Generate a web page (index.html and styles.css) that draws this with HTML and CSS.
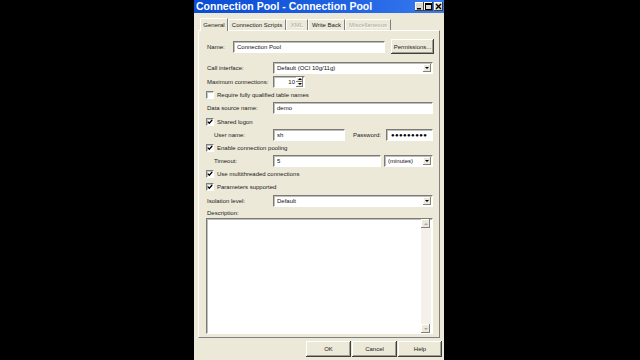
FILE: index.html
```html
<!DOCTYPE html>
<html lang="en">
<head>
  <meta charset="UTF-8" />
  <title>Connection Pool</title>
  <link rel="stylesheet" href="styles.css">
</head>
<body>

<div class="window">
  <div class="titlebar">
    <span class="title">Connection Pool - Connection Pool</span>
    <div class="caption">
      <span class="cap-btn"><svg width="7" height="7" viewBox="0 0 7 7"><rect x="1" y="5" width="4" height="1.5" fill="#000"/></svg></span>
      <span class="cap-btn"><svg width="7" height="7" viewBox="0 0 7 7"><rect x="0.5" y="0.5" width="6" height="6" fill="none" stroke="#000"/><rect x="0.5" y="0.5" width="6" height="1.5" fill="#000"/></svg></span>
      <span class="cap-btn close"><svg width="7" height="7" viewBox="0 0 7 7"><path d="M1 1 L6 6 M6 1 L1 6" stroke="#000" stroke-width="1.4"/></svg></span>
    </div>
  </div>

  <div class="tabs">
    <span class="tab active w-general">General</span>
    <span class="tab w-scripts">Connection Scripts</span>
    <span class="tab disabled w-xml">XML</span>
    <span class="tab w-write">Write Back</span>
    <span class="tab disabled w-misc">Miscellaneous</span>
  </div>

  <div class="panel">
    <div class="row row-name">
      <span class="label label-name">Name:</span>
      <div class="field name-field">Connection Pool</div>
      <span class="button perm">Permissions...</span>
    </div>

    <div class="row gap7">
      <span class="label">Call interface:</span>
      <div class="field select wide">Default (OCI 10g/11g)<span class="drop"><i class="arrow"></i></span></div>
    </div>

    <div class="row gap1">
      <span class="label">Maximum connections:</span>
      <div class="field spin">10<span class="spin-btns"><span class="spin-up"><i class="arrow up"></i></span><span class="spin-down"><i class="arrow"></i></span></span></div>
    </div>

    <div class="row">
      <span class="check"></span>
      <span>Require fully qualified table names</span>
    </div>

    <div class="row">
      <span class="label">Data source name:</span>
      <div class="field wide">demo</div>
    </div>

    <div class="row gap1">
      <span class="check on"><svg width="6" height="6" viewBox="0 0 6 6"><path d="M0.8 2.6 L2.3 4.2 L5.2 1" fill="none" stroke="#000" stroke-width="1.3"/></svg></span>
      <span>Shared logon</span>
    </div>

    <div class="row">
      <span class="label indent">User name:</span>
      <div class="field user">sh</div>
      <span class="label pass-label">Password:</span>
      <div class="field pass">●●●●●●●●●</div>
    </div>

    <div class="row">
      <span class="check on"><svg width="6" height="6" viewBox="0 0 6 6"><path d="M0.8 2.6 L2.3 4.2 L5.2 1" fill="none" stroke="#000" stroke-width="1.3"/></svg></span>
      <span>Enable connection pooling</span>
    </div>

    <div class="row">
      <span class="label indent">Timeout:</span>
      <div class="field timeout">5</div>
      <div class="field select minutes">(minutes)<span class="drop"><i class="arrow"></i></span></div>
    </div>

    <div class="row">
      <span class="check on"><svg width="6" height="6" viewBox="0 0 6 6"><path d="M0.8 2.6 L2.3 4.2 L5.2 1" fill="none" stroke="#000" stroke-width="1.3"/></svg></span>
      <span>Use multithreaded connections</span>
    </div>

    <div class="row">
      <span class="check on"><svg width="6" height="6" viewBox="0 0 6 6"><path d="M0.8 2.6 L2.3 4.2 L5.2 1" fill="none" stroke="#000" stroke-width="1.3"/></svg></span>
      <span>Parameters supported</span>
    </div>

    <div class="row gap1">
      <span class="label">Isolation level:</span>
      <div class="field select wide">Default<span class="drop"><i class="arrow"></i></span></div>
    </div>

    <div class="row desc-label">Description:</div>

    <div class="field textarea">
      <div class="scrollbar">
        <span class="sb-btn"><i class="arrow up dim"></i></span>
        <span class="sb-track"></span>
        <span class="sb-btn"><i class="arrow dim"></i></span>
      </div>
    </div>
  </div>

  <div class="footer">
    <span class="button foot">OK</span>
    <span class="button foot">Cancel</span>
    <span class="button foot help">Help</span>
  </div>
</div>

</body>
</html>
```

FILE: styles.css
```css
* { box-sizing: border-box; }
body { margin: 0; background: #000; font-family: "Liberation Sans", Arial, sans-serif; font-size: 6px; color: #1a1a1a; overflow: hidden; }

.window { width: 250px; height: 360px; margin-left: 194px; background: #ece9d8; display: flex; flex-direction: column; }

.titlebar { height: 13px; display: flex; align-items: center; justify-content: space-between; padding: 0 1px 0 2px; background: linear-gradient(to right, #0a4cd4, #1f62e2 60%, #3a7bef); }
.title { color: #fff; font-weight: bold; font-size: 10.5px; line-height: 13px; }
.caption { display: flex; }
.cap-btn { width: 9px; height: 9px; display: flex; align-items: center; justify-content: center; background: #dcd8ce; box-shadow: inset -1px -1px #404040, inset 1px 1px #fff; }
.cap-btn.close { margin-left: 1px; }

.tabs { display: flex; align-items: flex-end; height: 13px; margin: 4px 0 0 6px; }
.tab { height: 11px; display: flex; align-items: center; justify-content: center; border-top: 1px solid #fff; border-left: 1px solid #fff; border-right: 1px solid #808080; }
.tab.active { height: 13px; background: #ece9d8; margin-bottom: -1px; position: relative; }
.tab.disabled { color: #aca899; text-shadow: 1px 1px 0 #fff; }
.w-general { width: 28px; }
.w-scripts { width: 58px; }
.w-xml { width: 22px; }
.w-write { width: 37px; }
.w-misc { width: 46px; }

.panel { height: 308px; margin: 0 4px; border: 1px solid; border-color: #fff #808080 #808080 #fff; padding: 8px 5px 0 8px; display: flex; flex-direction: column; }

.row { display: flex; align-items: center; height: 13px; flex-shrink: 0; }
.row-name { height: 15px; }
.gap7 { margin-top: 7px; }
.gap1 { margin-top: 1px; }
.label { width: 66px; flex-shrink: 0; }
.label.indent { padding-left: 7px; }
.label-name { width: 26px; }
.pass-label { width: 33px; margin-left: 8px; }

.field { position: relative; height: 12px; display: flex; align-items: center; padding-left: 3px; background: #fff; border: 1px solid; border-color: #7a7a7a #fff #fff #7a7a7a; box-shadow: inset 1px 1px #c0beb5; white-space: nowrap; color: #111; }
.name-field { width: 152px; }
.wide { width: 160px; }
.user { width: 72px; }
.pass { width: 47px; font-size: 6px; letter-spacing: 0.4px; padding-left: 4px; color: #000; }
.timeout { width: 108px; }
.minutes { width: 49px; margin-left: 3px; }

.select .drop { position: absolute; right: 1px; top: 1px; width: 8px; height: 8px; }
.drop, .spin-up, .spin-down, .sb-btn { display: flex; align-items: center; justify-content: center; background: #ece9d8; box-shadow: inset -1px -1px #808080, inset 1px 1px #fff; }
.arrow { width: 0; height: 0; border-left: 2px solid transparent; border-right: 2px solid transparent; border-top: 2px solid #000; }
.arrow.up { border-top: 0; border-bottom: 2px solid #000; }
.arrow.dim { border-top-color: #aca899; }
.arrow.up.dim { border-bottom-color: #aca899; }

.spin { width: 32px; justify-content: flex-end; padding-right: 9px; }
.spin-btns { position: absolute; right: 1px; top: 0; display: flex; flex-direction: column; }
.spin-up, .spin-down { width: 7px; height: 5px; }

.check { width: 8px; height: 8px; margin: 0 3px 0 -1px; display: flex; align-items: center; justify-content: center; background: #fff; border: 1px solid; border-color: #808080 #fff #fff #808080; box-shadow: inset 1px 1px #c8c6bd; }

.button { display: flex; align-items: center; justify-content: center; background: #ece9d8; box-shadow: inset -1px -1px #404040, inset 1px 1px #fff, inset -2px -2px #a09d92; }
.perm { width: 43px; height: 15px; margin-left: 6px; }

.desc-label { height: 11px; }
.textarea { width: 227px; height: 116px; margin: 0 0 0 -1px; align-items: stretch; justify-content: flex-end; padding: 0 1px 0 0; }
.scrollbar { width: 10px; display: flex; flex-direction: column; }
.sb-btn { width: 9px; height: 9px; flex-shrink: 0; }
.sb-track { flex: 1; background: #f3f1ea; }

.footer { flex: 1; display: flex; justify-content: flex-end; align-items: flex-start; padding: 3px 2px 0 0; gap: 1px; }
.foot { width: 45px; height: 16px; }
.foot.help { width: 44px; }
```
